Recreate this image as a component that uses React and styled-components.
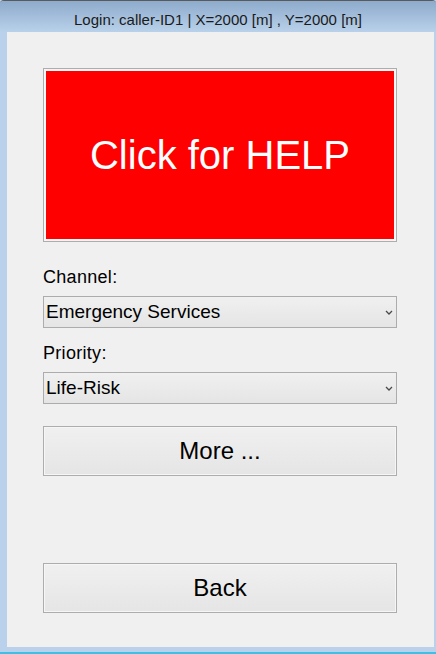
import React from "react";
import styled, { createGlobalStyle } from "styled-components";

const GlobalStyle = createGlobalStyle`
  html, body {
    margin: 0;
    padding: 0;
    background: #b9d1ea;
  }
  * {
    box-sizing: border-box;
  }
`;

const Window = styled.div`
  width: 436px;
  height: 654px;
  display: flex;
  flex-direction: column;
  background: #b9d1ea;
  border-top: 1px solid #5a5a5a;
  border-bottom: 2px solid #3cc0e6;
  border-radius: 4px 4px 0 0;
  overflow: hidden;
  font-family: "Liberation Sans", Arial, sans-serif;
`;

const TitleBar = styled.div`
  height: 31px;
  flex-shrink: 0;
  padding-top: 9px;
  text-align: center;
  font-size: 15px;
  line-height: 20px;
  color: #1a1a1a;
  background: linear-gradient(#8eabcc, #b9d1ea);
`;

const Client = styled.div`
  flex: 1;
  margin: 0 2px 5px 7px;
  padding: 36px 37px 34px 36px;
  background: #f0f0f0;
  display: flex;
  flex-direction: column;
`;

const HelpButton = styled.button`
  height: 174px;
  padding: 0;
  border: 1px solid #adadad;
  outline: 2px solid #f7f7f7;
  outline-offset: -3px;
  background: #ff0000;
  color: #ffffff;
  font-family: "Liberation Sans", Arial, sans-serif;
  font-size: 40px;
  cursor: pointer;
`;

const Label = styled.div`
  margin-top: ${(p) => p.$top}px;
  font-size: 18px;
  line-height: 20px;
  letter-spacing: 0.3px;
  color: #000;
`;

const Combo = styled.div`
  margin-top: 9px;
  height: 32px;
  display: flex;
  align-items: center;
  justify-content: space-between;
  padding: 0 3px 0 2px;
  border: 1px solid #acacac;
  background: linear-gradient(#f0f0f0, #e5e5e5);
  font-size: 19px;
  color: #000;
`;

const Chevron = () => (
  <svg width="8" height="5" viewBox="0 0 8 5">
    <path d="M1 1 L4 4 L7 1" fill="none" stroke="#4a4a4a" strokeWidth="1.3" />
  </svg>
);

const PushButton = styled.button`
  height: 50px;
  margin-top: ${(p) => p.$top || 0};
  padding: 0;
  border: 1px solid #adadad;
  box-shadow: inset 0 0 0 1px #f6f6f6;
  background: linear-gradient(#f0f0f0, #e5e5e5);
  font-family: "Liberation Sans", Arial, sans-serif;
  font-size: 24px;
  color: #000;
  cursor: pointer;
`;

export default function App() {
  return (
    <>
      <GlobalStyle />
      <Window>
        <TitleBar>Login: caller-ID1 | X=2000 [m] , Y=2000 [m]</TitleBar>
        <Client>
          <HelpButton>Click for HELP</HelpButton>
          <Label $top={25}>Channel:</Label>
          <Combo>
            <span>Emergency Services</span>
            <Chevron />
          </Combo>
          <Label $top={15}>Priority:</Label>
          <Combo>
            <span>Life-Risk</span>
            <Chevron />
          </Combo>
          <PushButton $top="22px">More ...</PushButton>
          <PushButton $top="auto">Back</PushButton>
        </Client>
      </Window>
    </>
  );
}
